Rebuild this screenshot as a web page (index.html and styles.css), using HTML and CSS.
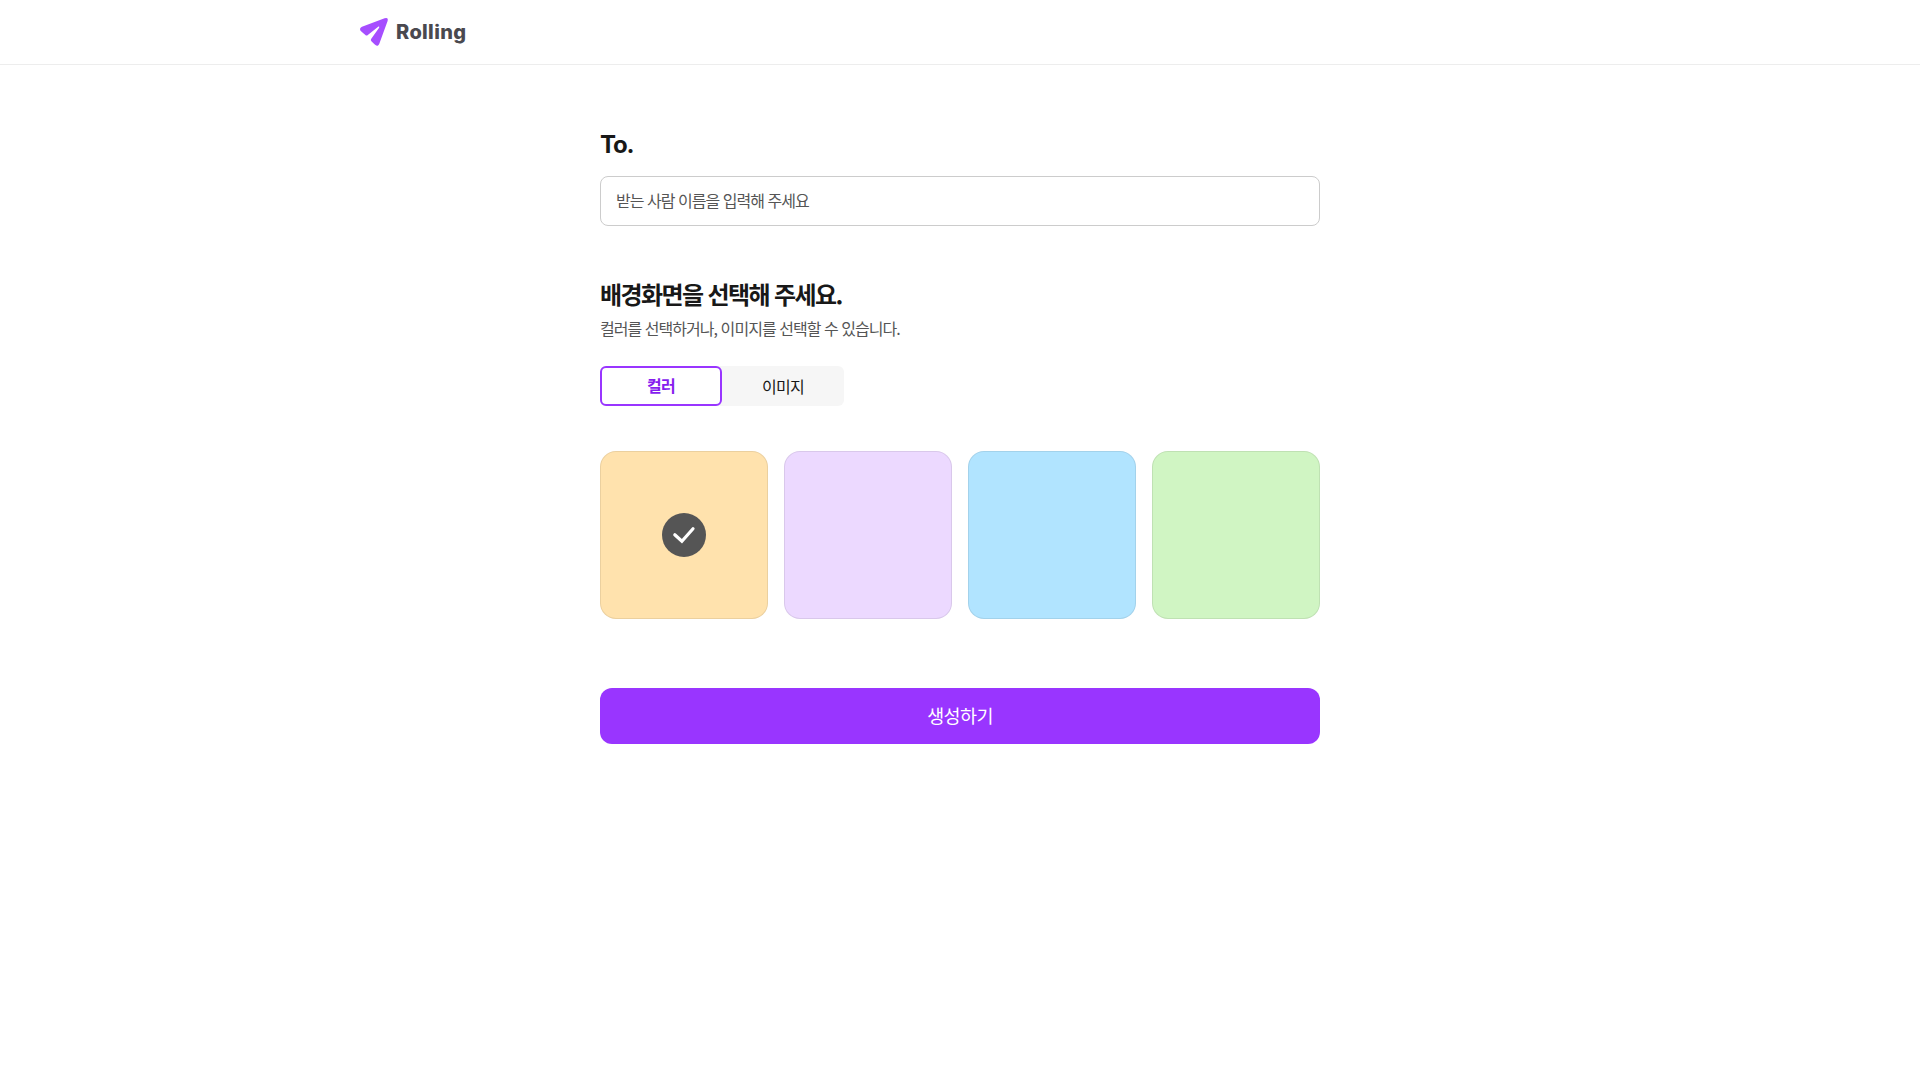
FILE: index.html
```html
<!DOCTYPE html>
<html lang="ko">
<head>
<meta charset="utf-8">
<title>Rolling</title>
<link rel="stylesheet" href="styles.css">
</head>
<body>
<header class="header">
  <div class="header-inner">
    <a class="logo">
      <svg class="logo-icon" viewBox="0 0 30 30" width="30" height="30" aria-hidden="true">
        <path fill="#a64eff" d="M25.6 1.3Q29.6.1 28.6 4.1L20.4 26.4C19.4 29.2 17.4 29.4 15.8 27.6L12.6 24.4Q11.3 23.1 12.1 21.9L20.1 10.7C20.5 9.9 20 9.2 19.2 9.7L8.8 18Q7.6 19 6.4 18L2.6 14.8C.4 13.2.7 10.8 3 9.8Z"/>
      </svg>
      <span class="logo-text">Rolling</span>
    </a>
  </div>
</header>
<main class="main">
  <label class="to-label" for="name">To.</label>
  <input class="name-input" id="name" type="text" placeholder="받는 사람 이름을 입력해 주세요">
  <h1 class="title">배경화면을 선택해 주세요.</h1>
  <p class="description">컬러를 선택하거나, 이미지를 선택할 수 있습니다.</p>
  <div class="tabs">
    <button class="tab tab-active" type="button"><span>컬러</span></button>
    <button class="tab" type="button"><span>이미지</span></button>
  </div>
  <div class="cards">
    <div class="card card-beige">
      <svg class="check" viewBox="0 0 44 44" width="44" height="44" aria-hidden="true">
        <circle cx="22" cy="22" r="22" fill="#555"/>
        <path d="M12.8 21.8L19.9 28.2L31 15.8" fill="none" stroke="#fff" stroke-width="3.2" stroke-linecap="round"/>
      </svg>
    </div>
    <div class="card card-purple"></div>
    <div class="card card-blue"></div>
    <div class="card card-green"></div>
  </div>
  <button class="submit" type="button"><span>생성하기</span></button>
</main>
</body>
</html>
```
FILE: styles.css
```css
* { box-sizing: border-box; margin: 0; padding: 0; }
body { background: #fff; color: #181818; font-family: "Noto Sans CJK KR", sans-serif; }
button, input { font-family: inherit; }
.header { height: 65px; border-bottom: 1px solid #ededed; }
.header-inner { width: 1202px; height: 64px; margin: 0 auto; display: flex; align-items: center; }
.logo { display: flex; align-items: center; gap: 7px; }
.logo-text { font: 800 20px/30px Inter, sans-serif; color: #4a494f; letter-spacing: 0.35px; }
.main { width: 720px; margin: 0 auto; padding-top: 59px; display: flex; flex-direction: column; }
.to-label { font: 700 24px/42px Inter, sans-serif; letter-spacing: -1.2px; }
.name-input { height: 50px; margin-top: 10px; padding: 0 15px 2px; border: 1px solid #ccc; border-radius: 8px; background: #fff; font-size: 16px; letter-spacing: -0.97px; outline: none; }
.name-input::placeholder { color: #555; opacity: 1; }
.title { margin-top: 50px; font-size: 24px; line-height: 36px; font-weight: 700; letter-spacing: -1.6px; }
.description { margin-top: 3px; font-size: 16px; line-height: 26px; color: #555; letter-spacing: -0.96px; }
.tabs { width: 244px; height: 40px; margin-top: 25px; display: flex; border-radius: 6px; background: #f6f6f6; }
.tab { width: 122px; border: 2px solid transparent; border-radius: 6px; background: none; color: #181818; font-size: 16px; letter-spacing: -0.8px; }
.tab-active { padding-bottom: 2px; border-color: #9935ff; background: #fff; color: #861dee; font-weight: 700; }
.cards { margin-top: 45px; display: grid; grid-template-columns: repeat(4, 168px); gap: 16px; }
.card { height: 168px; display: flex; align-items: center; justify-content: center; border: 1px solid rgba(0, 0, 0, 0.08); border-radius: 16px; }
.card-beige { background-color: #ffe2ad; }
.card-purple { background-color: #ecd9ff; }
.card-blue { background-color: #b1e4ff; }
.card-green { background-color: #d0f5c3; }
.submit { height: 56px; padding-bottom: 2px; margin-top: 69px; border: 0; border-radius: 12px; background: #9935ff; color: #fff; font-size: 18.5px; letter-spacing: -0.6px; }
```
